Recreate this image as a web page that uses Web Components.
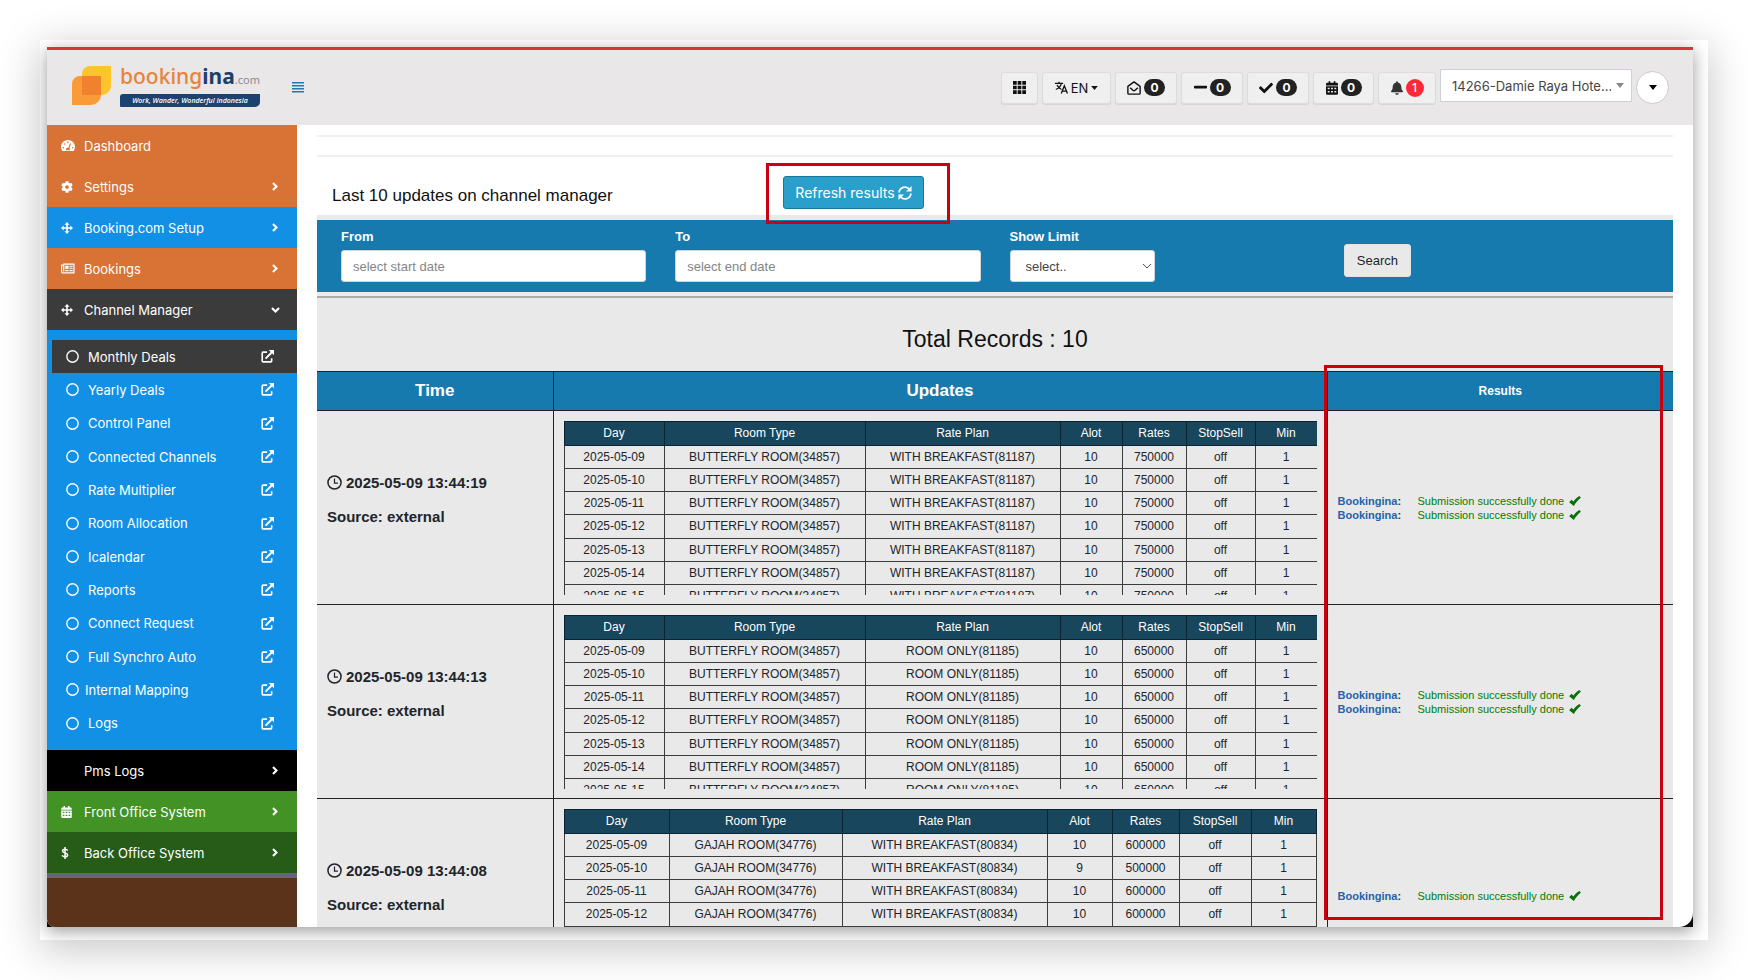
<!DOCTYPE html>
<html lang="en">
<head>
<meta charset="utf-8">
<title>Bookingina - Channel Manager</title>
<style>
  html, body { margin: 0; height: 100%; background: #fff; }
  body { font-family: "Liberation Sans", Arial, sans-serif; color: #212529; overflow: hidden; }
</style>
</head>
<body>
<app-window>
  <top-bar slot="header"></top-bar>
  <side-nav slot="nav"></side-nav>
  <channel-logs></channel-logs>
</app-window>

<script>
const define = (name, html, setup) => {
  const tpl = document.createElement('template');
  tpl.innerHTML = html;
  customElements.define(name, class extends HTMLElement {
    constructor() {
      super();
      this.attachShadow({ mode: 'open' }).append(tpl.content.cloneNode(true));
    }
    connectedCallback() {
      if (setup && !this.ready) { this.ready = true; setup(this, this.shadowRoot); }
    }
  });
};

const ICONS = {
  gauge: ['0 0 576 448', '<path fill-rule="evenodd" d="M288 0C129 0 0 129 0 288c0 52.800 14.250 102.260 39.060 144.800 5.610 9.620 16.300 15.200 27.440 15.200h443c11.140 0 21.830-5.580 27.440-15.200C561.750 390.260 576 340.800 576 288 576 129 447 0 288 0zm0 64c17.670 0 32 14.330 32 32s-14.330 32-32 32-32-14.330-32-32 14.330-32 32-32zM96 352c-17.670 0-32-14.330-32-32s14.330-32 32-32 32 14.330 32 32-14.330 32-32 32zm48-160c-17.670 0-32-14.330-32-32s14.330-32 32-32 32 14.330 32 32-14.330 32-32 32zm246-58c12 4 19 18 15 30l-58 172c13 12 21 28 21 48 0 12-3 23-9 32H217c-6-9-9-20-9-32 0-35 29-64 64-64 10 0 20 2 29 6l58-172c4-13 18-24 31-20zm90 218c-17.670 0-32-14.330-32-32s14.330-32 32-32 32 14.330 32 32-14.330 32-32 32z"/>'],
  cog: ['0 0 512 512', '<path d="M487.4 315.7l-42.6-24.6c4.3-23.2 4.3-47 0-70.2l42.6-24.6c4.900-2.800 7.100-8.600 5.500-14-11.100-35.600-30-67.800-54.700-94.600-3.800-4.100-10-5.100-14.800-2.300L380.8 110c-17.900-15.400-38.500-27.300-60.800-35.100V25.8c0-5.600-3.900-10.500-9.400-11.700-36.700-8.200-74.300-7.800-109.200 0-5.500 1.200-9.400 6.100-9.400 11.700V75c-22.200 7.900-42.800 19.800-60.800 35.100L88.700 85.500c-4.900-2.800-11-1.900-14.800 2.300-24.700 26.700-43.600 58.900-54.700 94.600-1.700 5.400.6 11.200 5.500 14L67.300 221c-4.300 23.200-4.300 47 0 70.200l-42.600 24.600c-4.900 2.800-7.100 8.600-5.500 14 11.100 35.600 30 67.800 54.700 94.600 3.800 4.100 10 5.100 14.800 2.300l42.600-24.600c17.900 15.400 38.500 27.300 60.800 35.100v49.200c0 5.600 3.900 10.500 9.400 11.700 36.700 8.200 74.300 7.800 109.200 0 5.500-1.200 9.400-6.100 9.400-11.700v-49.200c22.200-7.900 42.800-19.800 60.800-35.100l42.600 24.600c4.900 2.800 11 1.900 14.800-2.300 24.700-26.700 43.600-58.900 54.700-94.600 1.500-5.500-.7-11.300-5.600-14.100zM256 336c-44.100 0-80-35.900-80-80s35.900-80 80-80 80 35.900 80 80-35.900 80-80 80z"/>'],
  move: ['0 0 16 16', '<path d="M8 0l3.400 3.600H9.100v3.300h3.300V4.600L16 8l-3.600 3.400V9.100H9.100v3.300h2.300L8 16l-3.400-3.600h2.300V9.100H3.600v2.300L0 8l3.600-3.400v2.300h3.300V3.600H4.600z"/>'],
  news: ['0 0 18 14', '<path fill="none" stroke="currentColor" stroke-width="1.500" d="M3.500 2.600V1.400h13.200v11.200H2.400A1.600 1.600 0 0 1 .8 11V2.600h2.700V11"/><path d="M5.500 3.500h4.200v4H5.500zM10.800 3.500h4.200v1.400h-4.200zM10.800 6h4.200v1.400h-4.200zM5.500 8.900h4.200v1.500H5.500zM10.800 8.900h4.200v1.500h-4.200z"/>'],
  calendar: ['0 0 14 16', '<path fill-rule="evenodd" d="M0 6h14v8.500a1.500 1.500 0 0 1-1.500 1.500h-11A1.500 1.500 0 0 1 0 14.500zM2 7.600v1.800h2.200V7.600zm3.900 0v1.800h2.200V7.600zm3.900 0v1.800H12V7.600zM2 11.500v1.800h2.200v-1.800zm3.900 0v1.800h2.200v-1.800zm3.900 0v1.800H12v-1.800zM0 5V3.500A1.500 1.500 0 0 1 1.500 2H3V.4C3 .2 3.200 0 3.400 0h1.200c.2 0 .4.2.4.4V2h4V.4c0-.2.2-.4.4-.4h1.200c.2 0 .4.2.4.4V2h1.500A1.500 1.500 0 0 1 14 3.500V5z"/>'],
  dollar: ['0 0 10 16', '<path fill="none" stroke="currentColor" stroke-width="2" d="M5 0v16M8.600 4.700C7.800 3.600 6.600 3 5 3 3 3 1.700 3.900 1.700 5.400 1.700 8.700 8.500 7.200 8.500 10.600 8.500 12.200 7 13 5 13 3.300 13 1.900 12.400 1 11.200"/>'],
  ring: ['0 0 16 16', '<circle cx="8" cy="8" r="7" fill="none" stroke="currentColor" stroke-width="1.700"/>'],
  external: ['0 0 16 16', '<path fill="none" stroke="currentColor" stroke-width="2" d="M7.500 2.600H2.500a1 1 0 0 0-1 1v10a1 1 0 0 0 1 1h9.600a1 1 0 0 0 1-1V10"/><path fill="none" stroke="currentColor" stroke-width="2.400" d="M5.600 10.600l7.800-7.800"/><path d="M9.400 0H16v6.600z"/>'],
  right: ['0 0 8 12', '<path fill="none" stroke="currentColor" stroke-width="2.800" d="M1.300 1.300L6 6l-4.700 4.700"/>'],
  down: ['0 0 12 8', '<path fill="none" stroke="currentColor" stroke-width="2.800" d="M1.300 1.300L6 6l4.700-4.700"/>'],
  grid: ['0 0 14 14', '<path d="M0 0h4v4H0zM5 0h4v4H5zM10 0h4v4h-4zM0 5h4v4H0zM5 5h4v4H5zM10 5h4v4h-4zM0 10h4v4H0zM5 10h4v4H5zM10 10h4v4h-4z"/>'],
  translate: ['0 0 16 16', '<path fill="none" stroke="currentColor" stroke-width="1.500" d="M0 3h10M5 1v2M8 3C7 6.500 4.500 9 1 10.500M2.500 5C3.500 7.500 5.500 9.500 8 10.500"/><path fill="none" stroke="currentColor" stroke-width="1.600" d="M7.700 15.500L11.500 6l3.800 9.500M9 12.400h5"/>'],
  mail: ['0 0 16 16', '<path fill="none" stroke="currentColor" stroke-width="1.600" stroke-linejoin="round" d="M1 6.200L8 1l7 5.200V14a1 1 0 0 1-1 1H2a1 1 0 0 1-1-1zM3.600 7.600L6.800 10.600a1.900 1.900 0 0 0 2.400 0L12.400 7.600"/>'],
  minus: ['0 0 14 14', '<rect y="5" width="14" height="3" rx="1"/>'],
  check: ['0 0 512 512', '<path d="M173.898 439.404l-166.400-166.400c-9.997-9.997-9.997-26.206 0-36.204l36.203-36.204c9.997-9.998 26.207-9.998 36.204 0L192 312.690 432.095 72.596c9.997-9.997 26.207-9.997 36.204 0l36.203 36.204c9.997 9.997 9.997 26.206 0 36.204l-294.400 294.401c-9.998 9.997-26.207 9.997-36.204-.001z"/>'],
  bell: ['0 0 448 512', '<path d="M224 512c35.320 0 63.970-28.650 63.970-64H160.030c0 35.350 28.650 64 63.970 64zm215.390-149.710c-19.320-20.760-55.470-51.990-55.470-154.290 0-77.700-54.480-139.900-127.940-155.160V32c0-17.670-14.320-32-31.980-32s-31.980 14.330-31.980 32v20.840C118.560 68.100 64.080 130.300 64.080 208c0 102.300-36.150 133.530-55.470 154.290-6 6.450-8.660 14.160-8.610 21.710.11 16.400 12.980 32 32.100 32h383.800c19.120 0 32-15.600 32.100-32 .05-7.550-2.610-15.270-8.610-21.710z"/>'],
  caret: ['0 0 10 6', '<path d="M0 0h10L5 6z"/>'],
  menu: ['0 0 12 11', '<path d="M0 0h12v1.500H0zM0 3h12v1.500H0zM0 6h12v1.500H0zM0 9h12v1.500H0z"/>'],
  refresh: ['0 0 16 16', '<path fill="none" stroke="currentColor" stroke-width="2" d="M1.300 7.400A6.600 6.600 0 0 1 13 3.700M14.700 8.600A6.600 6.600 0 0 1 3 12.300"/><path d="M15.500 0v6.400H9.200zM.5 16V9.600h6.300z"/>'],
  clock: ['0 0 16 16', '<circle cx="8" cy="8" r="7" fill="none" stroke="currentColor" stroke-width="1.600"/><path fill="none" stroke="currentColor" stroke-width="1.300" d="M8 3.600V8.600h3.600"/>'],
  tick: ['0 0 14 12', '<path d="M0 7.400L2.800 4.400l2.400 2.200C7.200 3.600 9.600 1.400 12.400 0L14 2C10.600 4.600 8 7.800 5.600 12z"/>']
};

/* <ui-icon name size> : one glyph from the set above, drawn in the current colour */
define('ui-icon', `<style>
  :host { display: inline-flex; flex: none; }
  svg { display: block; fill: currentColor; overflow: visible; }
</style>`, (el, root) => {
  const [box, body] = ICONS[el.getAttribute('name')];
  const [, , w, h] = box.split(' ').map(Number);
  const height = Number(el.getAttribute('size') || 12);
  root.innerHTML += `<svg aria-hidden="true" viewBox="${box}" height="${height}" width="${Math.round(height * w / h)}">${body}</svg>`;
});

/* Red annotation frame; its host decides where it lies */
define('highlight-box', `<style>
  :host { display: block; position: absolute; box-sizing: border-box; border: 3px solid #c8000f; pointer-events: none; z-index: 2; }
</style>`);

define('app-window', `<style>
  :host { display: flex; box-sizing: border-box; height: 100vh; padding: 40px; }
  .frame { flex: 1; min-width: 0; display: flex; padding: 7px 15px 13px 7px; overflow: hidden; background: #fff; }
  .halo { flex: 1; min-width: 0; display: flex; box-shadow: 0 8px 40px rgba(0,0,0,.24); }
  .back { flex: 1; min-width: 0; display: flex; background: #0c0c0c; box-shadow: 0 4px 16px rgba(0,0,0,.4); }
  .window { flex: 1; min-width: 0; display: flex; flex-direction: column; overflow: hidden; background: #fff; border-radius: 0 0 14px 8px; }
  .body { flex: 1; min-height: 0; display: flex; }
  ::slotted(channel-logs) { flex: 1; min-width: 0; }
</style>
<div class="halo"><div class="frame"><div class="back"><div class="window">
  <slot name="header"></slot>
  <div class="body"><slot name="nav"></slot><slot></slot></div>
</div></div></div></div>`);

define('brand-logo', `<style>
  :host { display: flex; gap: 9px; align-items: center; margin-bottom: 4px; }
  .mark { display: block; flex: none; }
  .words { width: 140px; }
  .name { display: flex; align-items: baseline; font: 600 21px/22px "Noto Sans", "Open Sans", sans-serif; color: #e8833a; }
  .name span { font-weight: 500; }
  b { font-weight: 700; color: #1b4168; }
  small { font-size: 11px; font-weight: 400; color: #8a8c90; }
  .tag { height: 13px; margin-top: 3px; border-radius: 3px 0 5px 1px; background: #1b4270; color: #fff; text-align: center;
         font: italic 600 7px/13px "Open Sans", sans-serif; white-space: nowrap; }
</style>
<svg class="mark" width="39" height="39" viewBox="0 0 39 39" aria-hidden="true">
  <path fill="#fec52a" d="M18 0h21v20a9 9 0 0 1-9 9H10V8a8 8 0 0 1 8-8z"/>
  <path fill="#f89b38" d="M8 10h21v19a10 10 0 0 1-10 10H0V18a8 8 0 0 1 8-8z"/>
  <path fill="#f1812f" d="M10 10h19v19H10z"/>
</svg>
<div class="words">
  <div class="name"><span>booking</span><b>ina</b><small>.com</small></div>
  <div class="tag">Work, Wander, Wonderful Indonesia</div>
</div>`);

/* <tool-button icon count tone> : toolbar button with an optional counter */
define('tool-button', `<style>
  :host { display: block; width: var(--w, 62px); }
  button { display: flex; align-items: center; justify-content: center; gap: 3px; width: 100%; height: 32px; padding: 0; color: #111;
    background: #efefef; border: 1px solid #dcdcdc; border-radius: 3px; font: 13px/18px Inter, sans-serif; box-shadow: 0 1px 1px rgba(0,0,0,.08); }
  .count { width: 21px; height: 17px; border-radius: 9px; background: #222; color: #fff; font: 700 12px/17px Inter, sans-serif; text-align: center; }
  :host([tone=alert]) .count { width: 18px; height: 18px; line-height: 18px; background: #fb2a36; font-weight: 500; }
  :host([tone=alert]) ui-icon { color: #333; }
</style><button type="button"></button>`, (el, root) => {
  const count = el.getAttribute('count'), size = el.getAttribute('size') || 14;
  const button = root.querySelector('button');
  button.setAttribute('aria-label', el.getAttribute('label'));
  button.innerHTML = `<ui-icon name="${el.getAttribute('icon')}" size="${size}"></ui-icon>` +
    (count ? `<span class="count">${count}</span>` : '<slot></slot>');
});

define('top-bar', `<style>
  :host { display: flex; align-items: center; flex: none; box-sizing: border-box; height: 78px; padding: 0 24px 0 25px;
    border-top: 3px solid #d9333b; background: #e9e7e8; }
  .menu { margin-left: 32px; padding: 0; border: 0; background: none; color: #2079b4; display: flex; }
  .tools { display: flex; gap: 4px; margin-left: auto; align-items: center; }
  .property { position: relative; width: 192px; margin-bottom: 4px; color: #888; }
  select { appearance: none; box-sizing: border-box; width: 100%; height: 33px; padding: 0 20px 0 11px; border: 1px solid #cfcfd8; border-radius: 0;
    background: #fff; color: #444; font: 13px/18px Inter, sans-serif; }
  .property ui-icon { position: absolute; right: 8px; top: 14px; }
  .user { display: grid; place-items: center; width: 33px; height: 33px; padding: 0; border: 1px solid #ccc; border-radius: 50%; background: #fff; color: #000; }
</style>
<brand-logo></brand-logo>
<button class="menu" type="button" aria-label="Toggle menu"><ui-icon name="menu" size="11"></ui-icon></button>
<div class="tools">
  <tool-button icon="grid" size="13" label="Apps" style="--w:37px"></tool-button>
  <tool-button icon="translate" size="13" label="Language EN" style="--w:69px">EN <ui-icon name="caret" size="4"></ui-icon></tool-button>
  <tool-button icon="mail" label="Messages" count="0"></tool-button>
  <tool-button icon="minus" size="13" label="Cancelled" count="0"></tool-button>
  <tool-button icon="check" label="Confirmed" count="0"></tool-button>
  <tool-button icon="calendar" label="Calendar" count="0" style="--w:61px"></tool-button>
  <tool-button icon="bell" label="Alerts" count="1" tone="alert" style="--w:58px"></tool-button>
  <div class="property">
    <select aria-label="Property"><option>14266-Damie Raya Hote...</option></select>
    <ui-icon name="caret" size="5"></ui-icon>
  </div>
  <button class="user" type="button" aria-label="Account"><ui-icon name="caret" size="5"></ui-icon></button>
</div>`);

/* <nav-item icon tail> : top level entry */
define('nav-item', `<style>
  :host { display: block; background: var(--bg, #d87335); color: #fff; }
  a { display: flex; align-items: center; height: 41px; padding: 0 16px 0 14px; color: inherit; text-decoration: none; font: 13px/20px Inter, sans-serif; }
  .icon { width: 23px; display: flex; }
  .tail { width: 12px; margin-left: auto; display: flex; justify-content: center; }
</style><a href="#"><span class="icon"></span><slot></slot><span class="tail"></span></a>`, (el, root) => {
  const icon = el.getAttribute('icon'), tail = el.getAttribute('tail');
  if (icon) root.querySelector('.icon').innerHTML = `<ui-icon name="${icon}" size="${el.getAttribute('size') || 12}"></ui-icon>`;
  if (tail) root.querySelector('.tail').innerHTML = `<ui-icon name="${tail}" size="${tail === 'down' ? 6 : 9}"></ui-icon>`;
});

define('sub-item', `<style>
  :host { display: block; margin-left: 5px; color: #fff; }
  :host([active]) { background: #3b3b3b; }
  a { display: flex; align-items: center; height: 100%; padding: 0 23px 0 14px; gap: 9px; color: inherit; text-decoration: none; font: 13px/20px Inter, sans-serif; }
  :host([tight]) a { gap: 6px; }
  .ext { margin-left: auto; }
</style><a href="#"><ui-icon name="ring" size="13"></ui-icon><slot></slot><ui-icon class="ext" name="external" size="13"></ui-icon></a>`);

define('side-nav', `<style>
  :host { display: block; flex: none; width: 250px; background: #5b321a; }
  .sub { display: grid; grid-auto-rows: 1fr; height: 400px; padding: 10px 0; background: #1290e6; }
  .rule { height: 5px; background: #65657c; }
</style>
<nav>
  <nav-item icon="gauge" size="11">Dashboard</nav-item>
  <nav-item icon="cog" tail="right">Settings</nav-item>
  <nav-item icon="move" tail="right" style="--bg:#1290e6">Booking.com Setup</nav-item>
  <nav-item icon="news" size="11" tail="right">Bookings</nav-item>
  <nav-item icon="move" tail="down" style="--bg:#3b3b3b">Channel Manager</nav-item>
  <div class="sub">
    <sub-item active>Monthly Deals</sub-item><sub-item>Yearly Deals</sub-item><sub-item>Control Panel</sub-item>
    <sub-item>Connected Channels</sub-item><sub-item>Rate Multiplier</sub-item><sub-item>Room Allocation</sub-item>
    <sub-item>Icalendar</sub-item><sub-item>Reports</sub-item><sub-item>Connect Request</sub-item>
    <sub-item>Full Synchro Auto</sub-item><sub-item tight>Internal Mapping</sub-item><sub-item>Logs</sub-item>
  </div>
  <nav-item tail="right" style="--bg:#000">Pms Logs</nav-item>
  <nav-item icon="calendar" tail="right" style="--bg:#429225">Front Office System</nav-item>
  <nav-item icon="dollar" tail="right" style="--bg:#265b18">Back Office System</nav-item>
  <div class="rule"></div>
</nav>`);

define('filter-bar', `<style>
  :host { display: block; background: #177aae; border-top: 5px solid #e9e9e9; }
  form { display: grid; grid-template-columns: repeat(4, 1fr); gap: 29px; height: 72px; padding: 0 24px; font-size: 13px; box-sizing: border-box; }
  .field { padding-top: 8px; }
  label { display: block; height: 22px; line-height: 17px; font-weight: 700; color: #fff; }
  input, select { box-sizing: border-box; width: 100%; height: 32px; padding: 0 11px; border: 1px solid #cfd6da; border-radius: 3px; background: #fff; color: #444; font: inherit; }
  input::placeholder { color: #858585; opacity: 1; }
  .limit { position: relative; width: 145px; }
  select { appearance: none; padding: 0 15px; }
  .limit svg { position: absolute; right: 4px; top: 12px; }
  button { align-self: start; justify-self: start; margin-top: 24px; height: 33px; padding: 0 12px; border: 1px solid #e2e2e2; border-radius: 3px; background: #e9e9e9; color: #212529; font: inherit; }
</style>
<form>
  <div class="field"><label for="from">From</label><input id="from" placeholder="select start date"></div>
  <div class="field"><label for="to">To</label><input id="to" placeholder="select end date"></div>
  <div class="field"><label for="limit">Show Limit</label>
    <div class="limit"><select id="limit"><option>select..</option></select>
      <svg width="8" height="8" viewBox="0 0 8 8" fill="none" stroke="#555" aria-hidden="true"><path d="M0 2l4 4 4-4"/></svg></div></div>
  <button type="button">Search</button>
</form>`);

/* <rate-grid cols room plan rates lots> : scrollable day by day list of one update */
define('rate-grid', `<style>
  :host { display: block; height: 174px; overflow: auto; scrollbar-width: none; }
  table { width: 100%; height: 188px; table-layout: fixed; border-collapse: collapse; font-size: 12px; line-height: 14px; color: #212529; }
  th, td { padding: 0; border: 1px solid #3c3c3c; text-align: center; font-weight: 400; white-space: nowrap; }
  th { height: 23px; background: #18465c; color: #fff; border-color: #0b2431; }
</style><table><colgroup></colgroup>
<thead><tr><th>Day</th><th>Room Type</th><th>Rate Plan</th><th>Alot</th><th>Rates</th><th>StopSell</th><th>Min</th></tr></thead><tbody></tbody></table>`, (el, root) => {
  const list = name => el.getAttribute(name).split(',');
  root.querySelector('colgroup').innerHTML = list('cols').map(w => `<col style="width:${w}px">`).join('');
  const rates = list('rates'), lots = list('lots');
  root.querySelector('tbody').innerHTML = Array.from({ length: 7 }, (_, i) => {
    const day = `2025-05-${String(9 + i).padStart(2, '0')}`;
    return '<tr>' + [day, el.getAttribute('room'), el.getAttribute('plan'), lots[i] || lots[0], rates[i] || rates[0], 'off', '1']
      .map(v => `<td>${v}</td>`).join('') + '</tr>';
  }).join('');
});

define('submit-result', `<style>
  :host { display: flex; align-items: center; font-size: 11px; line-height: 14px; color: green; }
  b { width: 80px; color: #333; }
  b span { color: #2463ae; }
  ui-icon { margin-left: 5px; color: #0b700b; }
</style><b><span>Bookingina</span>:</b><span>Submission successfully done</span><ui-icon name="tick" size="10"></ui-icon>`);

define('update-log', `<style>
  :host { display: block; position: relative; }
  table { width: 100%; table-layout: fixed; border-collapse: collapse; }
  th { height: 38px; padding: 0; background: #177aae; color: #fff; font-size: 17px; line-height: 20px; }
  th:last-child { font-size: 12px; }
  th, td { border: 1px solid #222; }
  th:first-child, td:first-child { border-left: 0; }
  th:last-child, td:last-child { border-right: 0; }
  td { height: 194px; box-sizing: border-box; padding: 0 10px; background: #e9e9e9; vertical-align: middle; }
  p { margin: 0 0 16px; font-size: 15px; line-height: 18px; font-weight: 700; display: flex; align-items: center; gap: 4px; }
  highlight-box { top: -6px; right: 10px; width: 25%; height: 555px; }
</style>
<table><colgroup><col style="width:236px"><col style="width:774px"><col style="width:346px"></colgroup>
<thead><tr><th>Time</th><th>Updates</th><th>Results</th></tr></thead><tbody></tbody></table>
<highlight-box></highlight-box>`, (el, root) => {
  const wide = '100,201,195,62,64,69,62';
  const rows = [
    ['13:44:19', `cols="${wide}" room="BUTTERFLY ROOM(34857)" plan="WITH BREAKFAST(81187)" lots="10" rates="750000"`, 2],
    ['13:44:13', `cols="${wide}" room="BUTTERFLY ROOM(34857)" plan="ROOM ONLY(81185)" lots="10" rates="650000"`, 2],
    ['13:44:08', `cols="105,173,205,65,67,72,65" room="GAJAH ROOM(34776)" plan="WITH BREAKFAST(80834)" lots="10,9" rates="600000,500000"`, 1]
  ];
  root.querySelector('tbody').innerHTML = rows.map(([time, grid, n]) => `<tr>
    <td><p><ui-icon name="clock" size="15"></ui-icon>2025-05-09 ${time}</p><p>Source: external</p></td>
    <td><rate-grid ${grid}></rate-grid></td>
    <td>${'<submit-result></submit-result>'.repeat(n)}</td></tr>`).join('');
});

define('channel-logs', `<style>
  :host { display: block; padding: 0 20px; }
  .rules { box-sizing: border-box; height: 22px; margin-top: 10px; border: solid #f0f0f0; border-width: 2px 0; }
  .head { display: grid; grid-template-columns: 466px 1fr; align-items: center; height: 58px; }
  h1 { margin: 20px 0 0 15px; font-size: 17px; line-height: 20px; font-weight: 400; color: #111; }
  .refresh { position: relative; justify-self: start; margin-top: 13px; }
  .refresh button { display: flex; align-items: center; justify-content: center; gap: 3px; width: 141px; height: 33px; padding: 0; border: 1px solid #1b7696; border-radius: 3px;
    background: #2b9fcb; color: #fff; font: 14px/18px Inter, sans-serif; }
  highlight-box { inset: -13px -26px -15px -17px; }
  .panel { background: #e9e9e9; border-top: 2px solid #acacac; margin-top: 4px; box-shadow: 0 -4px #ececec; }
  h2 { margin: 0; height: 73px; font-size: 23px; line-height: 82px; font-weight: 400; text-align: center; color: #111; }
</style>
<div class="rules"></div>
<div class="head"><h1>Last 10 updates on channel manager</h1>
  <div class="refresh"><button type="button">Refresh results<ui-icon name="refresh" size="14"></ui-icon></button><highlight-box></highlight-box></div></div>
<filter-bar></filter-bar>
<div class="panel"><h2>Total Records : 10</h2><update-log></update-log></div>`);
</script>
</body>
</html>
